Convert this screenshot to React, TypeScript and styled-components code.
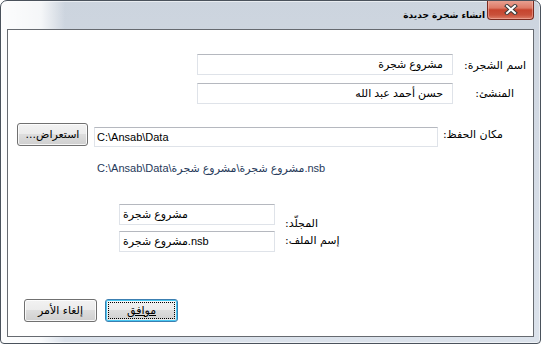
import React from "react";
import styled, { createGlobalStyle } from "styled-components";

const GlobalStyle = createGlobalStyle`
  html, body {
    margin: 0;
    padding: 0;
    background: #ffffff;
  }
  body {
    font-family: "Liberation Sans", "DejaVu Sans", sans-serif;
  }
`;

const Window = styled.div`
  box-sizing: border-box;
  width: 541px;
  height: 344px;
  display: flex;
  flex-direction: column;
  border: 1px solid #4a525c;
  border-radius: 7px 7px 4px 4px;
  background:
    linear-gradient(90deg, rgba(255, 255, 255, 0.95) 0px, rgba(255, 255, 255, 0.8) 40px, rgba(255, 255, 255, 0) 64px),
    linear-gradient(180deg, #ccd4de 0%, #d3dae4 40%, #dbe2eb 100%);
  box-shadow: inset 0 0 0 1px rgba(255, 255, 255, 0.55);
  overflow: hidden;
  font-family: "Liberation Sans", "DejaVu Sans", sans-serif;
  font-size: 11px;
  color: #000;
`;

const TitleBar = styled.div`
  height: 28px;
  flex: none;
  display: flex;
  align-items: flex-start;
  padding-right: 6px;
`;

const CloseButton = styled.div`
  box-sizing: border-box;
  width: 47px;
  height: 20px;
  margin-top: -1px;
  display: flex;
  align-items: center;
  justify-content: center;
  border: 1px solid #7a2b20;
  border-top: none;
  border-radius: 0 0 4px 4px;
  background: linear-gradient(180deg, #e9a596 0%, #dd7a66 42%, #c6442e 52%, #c9503a 78%, #dc7d68 100%);
  box-shadow: inset 0 0 0 1px rgba(255, 200, 190, 0.45);
`;

const TitleText = styled.div`
  margin-right: 2px;
  line-height: 29px;
  font-family: "DejaVu Sans", sans-serif;
  font-weight: bold;
  font-size: 9px;
  color: #000;
`;

const Client = styled.div`
  box-sizing: border-box;
  height: 308px;
  margin: 0 6px 6px;
  border: 1px solid #666a70;
  background: #ffffff;
  display: flex;
  flex-direction: column;
`;

interface FieldRowProps {
  $top: number;
  $height: number;
  $padLeft?: number;
  $toLeft?: boolean;
  $gap?: number;
}

const FieldRow = styled.div<FieldRowProps>`
  display: flex;
  align-items: flex-start;
  flex: none;
  height: ${(p) => p.$height}px;
  margin-top: ${(p) => p.$top}px;
  padding-left: ${(p) => p.$padLeft || 0}px;
  justify-content: ${(p) => (p.$toLeft ? "flex-end" : "flex-start")};
  gap: ${(p) => p.$gap || 0}px;
`;

interface LabelProps {
  $width: number;
  $inset?: number;
  $top: number;
  $alignLeft?: boolean;
}

const Label = styled.div<LabelProps>`
  box-sizing: border-box;
  flex: none;
  width: ${(p) => p.$width}px;
  padding-right: ${(p) => (p.$alignLeft ? 0 : p.$inset || 0)}px;
  padding-left: ${(p) => (p.$alignLeft ? p.$inset || 0 : 0)}px;
  margin-top: ${(p) => p.$top}px;
  text-align: ${(p) => (p.$alignLeft ? "left" : "right")};
  line-height: 14px;
  height: 14px;
  white-space: nowrap;
  font-family: "DejaVu Sans", sans-serif;
`;

interface BoxProps {
  $width: number;
  $height: number;
  $top?: number;
  $pad: number;
  $alignRight?: boolean;
}

const TextBox = styled.div<BoxProps>`
  box-sizing: border-box;
  flex: none;
  width: ${(p) => p.$width}px;
  height: ${(p) => p.$height}px;
  margin-top: ${(p) => p.$top || 0}px;
  border: 1px solid #dfe3e9;
  border-top-color: #b5b8bf;
  background: #ffffff;
  line-height: ${(p) => p.$height - 2}px;
  text-align: ${(p) => (p.$alignRight ? "right" : "left")};
  padding-right: ${(p) => (p.$alignRight ? p.$pad : 0)}px;
  padding-left: ${(p) => (p.$alignRight ? 0 : p.$pad)}px;
  white-space: nowrap;
  overflow: hidden;
  font-family: "Liberation Sans", "DejaVu Sans", sans-serif;
  font-size: 11px;
  color: #000;
`;

const PathText = styled.div`
  margin-top: 14px;
  padding-left: 89px;
  line-height: 14px;
  height: 14px;
  color: #26395a;
  white-space: nowrap;
  font-family: "Liberation Sans", "DejaVu Sans", sans-serif;
`;

interface ButtonProps {
  $width: number;
  $default?: boolean;
}

const Button = styled.div<ButtonProps>`
  box-sizing: border-box;
  position: relative;
  flex: none;
  width: ${(p) => p.$width}px;
  height: 23px;
  display: flex;
  align-items: center;
  justify-content: center;
  border: 1px solid ${(p) => (p.$default ? "#3c7fb1" : "#707070")};
  border-radius: 3px;
  background: linear-gradient(180deg, #f2f2f2 0%, #ebebeb 49%, #dddddd 50%, #cfcfcf 100%);
  box-shadow: ${(p) =>
    p.$default
      ? "inset 0 0 0 1px #48c8f2, inset 0 0 0 2px rgba(255,255,255,0.5)"
      : "inset 0 0 0 1px rgba(255,255,255,0.8)"};
  font-family: "DejaVu Sans", sans-serif;
  font-size: 11px;
  color: #000;
  white-space: nowrap;
  ${(p) =>
    p.$default
      ? `&::after {
          content: "";
          position: absolute;
          inset: 2px;
          border: 1px dotted #000;
          border-radius: 1px;
        }`
      : ""}
`;

const AccessKey = styled.span`
  text-decoration: underline;
`;

function CloseGlyph() {
  return (
    <svg width="14" height="11" viewBox="0 0 14 11">
      <path d="M3 2 L11 9 M11 2 L3 9" stroke="#3a3a3a" strokeWidth="4" strokeLinecap="square" fill="none" />
      <path d="M3 2 L11 9 M11 2 L3 9" stroke="#ffffff" strokeWidth="2" strokeLinecap="square" fill="none" />
    </svg>
  );
}

export default function App() {
  return (
    <>
      <GlobalStyle />
      <Window dir="rtl">
        <TitleBar>
          <CloseButton>
            <CloseGlyph />
          </CloseButton>
          <TitleText>انشاء شجرة جديدة</TitleText>
        </TitleBar>
        <Client>
          <FieldRow $top={24} $height={21}>
            <Label $width={80} $inset={7} $top={5}>اسم الشجرة:</Label>
            <TextBox $width={256} $height={21} $pad={9} $alignRight>مشروع شجرة</TextBox>
          </FieldRow>
          <FieldRow $top={8} $height={21}>
            <Label $width={80} $inset={19} $top={4}>المنشئ:</Label>
            <TextBox $width={256} $height={21} $pad={9} $alignRight>حسن أحمد عبد الله</TextBox>
          </FieldRow>
          <FieldRow $top={19} $height={24} $gap={6}>
            <Label $width={89} $inset={30} $top={5}>مكان الحفظ:</Label>
            <TextBox $width={344} $height={20} $top={4} $pad={2} dir="ltr">C:\Ansab\Data</TextBox>
            <Button $width={71}>استعراض...</Button>
          </FieldRow>
          <PathText dir="ltr">C:\Ansab\Data\مشروع شجرة\مشروع شجرة.nsb</PathText>
          <FieldRow $top={29} $height={21} $padLeft={111} $toLeft>
            <Label $width={70} $inset={10} $top={13} $alignLeft>المجلّد:</Label>
            <TextBox $width={156} $height={21} $pad={3} dir="ltr">مشروع شجرة</TextBox>
          </FieldRow>
          <FieldRow $top={6} $height={21} $padLeft={111} $toLeft>
            <Label $width={70} $inset={10} $top={3} $alignLeft>إسم الملف:</Label>
            <TextBox $width={156} $height={21} $pad={3} dir="ltr">مشروع شجرة.nsb</TextBox>
          </FieldRow>
          <FieldRow $top={47} $height={23} $padLeft={16} $toLeft $gap={8}>
            <Button $width={73} $default>
              <AccessKey>موافق</AccessKey>
            </Button>
            <Button $width={73}>إلغاء الأمر</Button>
          </FieldRow>
        </Client>
      </Window>
    </>
  );
}
